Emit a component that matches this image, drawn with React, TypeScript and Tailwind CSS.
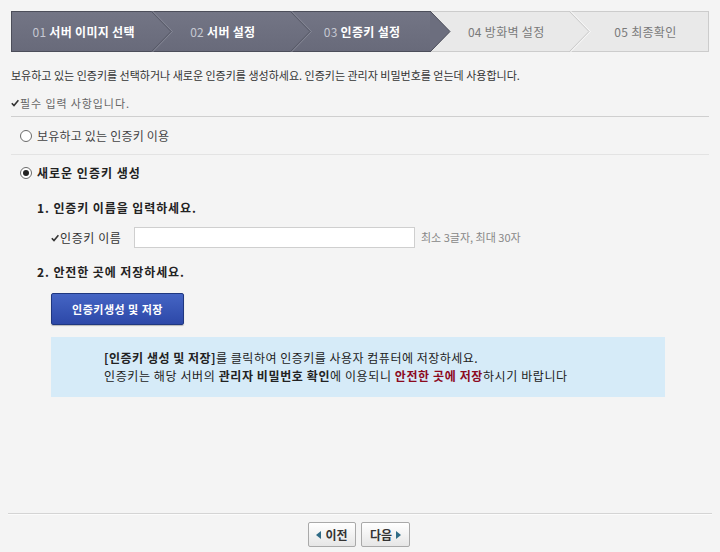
import React from "react";

const steps = [
  { n: "01", t: "서버 이미지 선택", dark: true },
  { n: "02", t: "서버 설정", dark: true },
  { n: "03", t: "인증키 설정", dark: true },
  { n: "04", t: "방화벽 설정", dark: false },
  { n: "05", t: "최종확인", dark: false },
];

function Chevron({ kind }: { kind: "dd" | "dl" | "ll" }) {
  if (kind === "dd") {
    return (
      <svg className="absolute left-full top-[-1px] z-10" width="22" height="41" viewBox="0 0 22 41">
        <polyline points="0,0 20,20.5 0,41" fill="none" stroke="#565866" strokeWidth="1" />
        <polyline points="1.5,0 21.5,20.5 1.5,41" fill="none" stroke="#868896" strokeWidth="1" />
      </svg>
    );
  }
  if (kind === "dl") {
    return (
      <svg className="absolute left-full top-[-1px] z-10" width="22" height="41" viewBox="0 0 22 41">
        <polygon points="0,0 20,20.5 0,41" fill="#6c6e7e" />
        <polyline points="0,0 20,20.5 0,41" fill="none" stroke="#4a4c58" strokeWidth="1" />
      </svg>
    );
  }
  return (
    <svg className="absolute left-full top-[-1px] z-10" width="22" height="41" viewBox="0 0 22 41">
      <polyline points="0,0 20,20.5 0,41" fill="none" stroke="#c9c9c9" strokeWidth="1" />
      <polyline points="1.5,0 21.5,20.5 1.5,41" fill="none" stroke="#f8f8f8" strokeWidth="1" />
    </svg>
  );
}

function StepBar() {
  return (
    <div className="mx-[11px] mt-[11px] flex h-[41px]">
      {steps.map((s, i) => {
        const next = steps[i + 1];
        const kind = next ? (s.dark ? (next.dark ? "dd" : "dl") : "ll") : null;
        return (
          <div
            key={s.n}
            className={
              "relative flex flex-1 items-center justify-center border-y text-[12px] leading-none " +
              (s.dark
                ? "border-[#4c4e5a] bg-gradient-to-b from-[#737585] to-[#686a7a]"
                : "border-[#cccccc] bg-[#e9e9e9]") +
              (i === 0 ? " border-l" : "") +
              (i === steps.length - 1 ? " border-r" : "")
            }
          >
            {s.dark ? (
              <span className="pl-[4px] tracking-[0.3px]">
                <span className="text-[#c6c8d2]">{s.n} </span>
                <span className="font-bold text-white">{s.t}</span>
              </span>
            ) : (
              <span className="pl-[14px] tracking-[0.3px] text-[#7a7a7a]">
                {s.n} {s.t}
              </span>
            )}
            {kind && <Chevron kind={kind as "dd" | "dl" | "ll"} />}
          </div>
        );
      })}
    </div>
  );
}

function Check() {
  return (
    <svg width="8" height="8" viewBox="0 0 8 8" className="mr-[1px] inline-block">
      <polyline points="0.8,4.2 3,6.6 7.4,1.2" fill="none" stroke="#333" strokeWidth="1.6" />
    </svg>
  );
}

function Radio({ checked }: { checked?: boolean }) {
  return (
    <span className="flex h-[12px] w-[12px] items-center justify-center rounded-full border border-[#6a6a6a] bg-white">
      {checked && <span className="h-[6px] w-[6px] rounded-full bg-[#222]" />}
    </span>
  );
}

function Tri({ dir }: { dir: "l" | "r" }) {
  return (
    <svg width="5" height="8" viewBox="0 0 5 8">
      {dir === "l" ? (
        <polygon points="5,0 0,4 5,8" fill="#2f6b86" />
      ) : (
        <polygon points="0,0 5,4 0,8" fill="#2f6b86" />
      )}
    </svg>
  );
}

export default function App() {
  return (
    <div className="h-[552px] w-[720px] overflow-hidden bg-[#f4f4f4] font-['Noto_Sans_CJK_KR','Noto_Sans',sans-serif] text-[#333]">
      <StepBar />

      <p className="mx-[11px] mt-[16px] whitespace-nowrap text-[11px] leading-[14px] tracking-[0px] text-[#333]">
        보유하고 있는 인증키를 선택하거나 새로운 인증키를 생성하세요. 인증키는 관리자 비밀번호를 얻는데 사용합니다.
      </p>

      <div className="mx-[11px] mt-[14px] flex items-center text-[11px] leading-[14px] tracking-[0.9px] text-[#666]">
        <Check />
        필수 입력 사항입니다.
      </div>

      <div className="mx-[11px] mt-[6px] border-t border-[#cfcfcf]" />

      <div className="mx-[11px] flex h-[37px] items-center gap-[5px] pl-[9px] text-[12px] tracking-[0.2px] text-[#444]">
        <Radio />
        보유하고 있는 인증키 이용
      </div>

      <div className="mx-[11px] border-t border-[#e3e3e3]" />

      <div className="mx-[11px] flex h-[36px] items-center gap-[5px] pl-[9px] text-[12px] font-bold tracking-[1px] text-[#222]">
        <Radio checked />
        새로운 인증키 생성
      </div>

      <div className="ml-[37px] mt-[10px] text-[12px] font-bold leading-[14px] tracking-[0.9px] text-[#222]">
        1. 인증키 이름을 입력하세요.
      </div>

      <div className="ml-[51px] mt-[12px] flex h-[21px] items-center">
        <span className="flex w-[83px] items-center text-[12px] tracking-[0.6px] text-[#333]">
          <Check />
          인증키 이름
        </span>
        <input
          type="text"
          className="h-[21px] w-[281px] border border-[#cfcfcf] bg-white outline-none"
        />
        <span className="ml-[6px] text-[11px] tracking-[0px] text-[#888]">최소 3글자, 최대 30자</span>
      </div>

      <div className="ml-[37px] mt-[17px] text-[12px] font-bold leading-[14px] tracking-[0.9px] text-[#222]">
        2. 안전한 곳에 저장하세요.
      </div>

      <div className="ml-[51px] mt-[14px]">
        <button className="flex h-[32px] w-[133px] items-center justify-center rounded-[2px] border border-[#1f3780] bg-gradient-to-b from-[#4565c4] to-[#2d48a8] text-[11px] font-bold tracking-[0.5px] text-white shadow-[0_1px_1px_rgba(0,0,0,0.25)]">
          인증키생성 및 저장
        </button>
      </div>

      <div className="ml-[51px] mt-[12px] flex h-[60px] w-[614px] flex-col justify-center whitespace-nowrap bg-[#d6ebf8] pl-[53px] text-[12px] leading-[18px] text-[#222]">
        <div className="tracking-[0.5px]">
          <b>[인증키 생성 및 저장]</b>를 클릭하여 인증키를 사용자 컴퓨터에 저장하세요.
        </div>
        <div className="tracking-[0.6px]">
          인증키는 해당 서버의 <b>관리자 비밀번호 확인</b>에 이용되니{" "}
          <b className="text-[#8c0a1e]">안전한 곳에 저장</b>하시기 바랍니다
        </div>
      </div>

      <div className="ml-[8px] mr-[8px] mt-[116px] border-t border-b border-t-[#d4d4d4] border-b-[#fbfbfb]" />

      <div className="mt-[7px] flex justify-center gap-[5px] pr-[2px]">
        <button className="flex h-[25px] w-[48px] items-center justify-center gap-[4px] rounded-[2px] border border-[#a9a9a9] bg-gradient-to-b from-white to-[#e6e6e6] text-[12px] font-bold text-[#333]">
          <Tri dir="l" />
          이전
        </button>
        <button className="flex h-[25px] w-[49px] items-center justify-center gap-[4px] rounded-[2px] border border-[#a9a9a9] bg-gradient-to-b from-white to-[#e6e6e6] text-[12px] font-bold text-[#333]">
          다음
          <Tri dir="r" />
        </button>
      </div>
    </div>
  );
}
